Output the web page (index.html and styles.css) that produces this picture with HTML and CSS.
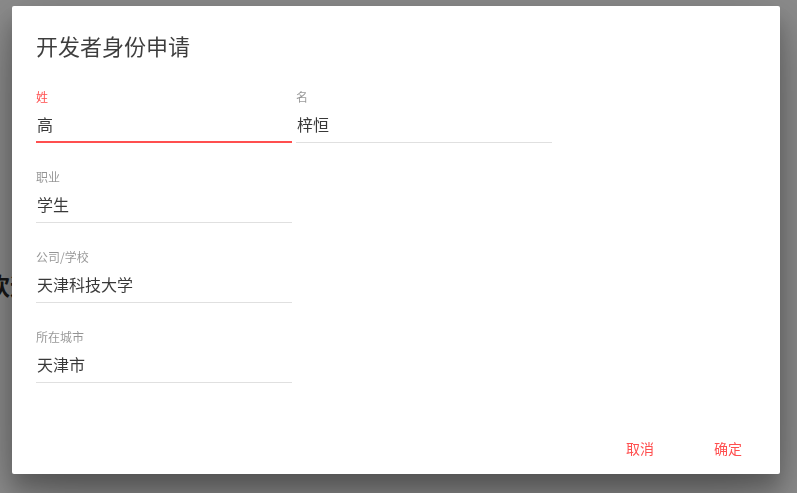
FILE: index.html
```html
<!DOCTYPE html>
<html lang="zh-CN">
<head>
<meta charset="utf-8">
<title>开发者身份申请</title>
<link rel="stylesheet" href="styles.css">
</head>
<body>
<main class="page">
  <h1 class="welcome">欢迎</h1>
</main>
<div class="backdrop"></div>
<div class="dialog" role="dialog">
  <h3 class="dialog-title">开发者身份申请</h3>
  <div class="dialog-content">
    <div class="row">
      <div class="field focused">
        <label class="field-label">姓</label>
        <div class="field-value">高</div>
        <span class="focus-bar"></span>
      </div>
      <div class="field">
        <label class="field-label">名</label>
        <div class="field-value">梓恒</div>
      </div>
    </div>
    <div class="row">
      <div class="field">
        <label class="field-label">职业</label>
        <div class="field-value">学生</div>
      </div>
    </div>
    <div class="row">
      <div class="field">
        <label class="field-label">公司/学校</label>
        <div class="field-value">天津科技大学</div>
      </div>
    </div>
    <div class="row">
      <div class="field">
        <label class="field-label">所在城市</label>
        <div class="field-value">天津市</div>
      </div>
    </div>
  </div>
  <div class="dialog-actions">
    <button class="flat-btn">取消</button>
    <button class="flat-btn">确定</button>
  </div>
</div>
</body>
</html>
```

FILE: styles.css
```css
* { box-sizing: border-box; }
html, body { margin: 0; padding: 0; }
body {
  width: 797px;
  height: 493px;
  overflow: hidden;
  background: #ffffff;
  font-family: "Noto Sans CJK SC", "Noto Sans", Roboto, sans-serif;
}
.page {
  padding-top: 270px;
}
.welcome {
  margin: 0 0 0 -14px;
  font-size: 24px;
  line-height: 30px;
  font-weight: 700;
  color: #2a2a2a;
  white-space: nowrap;
}
.backdrop {
  position: fixed;
  inset: 0;
  background: rgba(0, 0, 0, 0.45);
}
.dialog {
  position: absolute;
  left: 12px;
  top: 6px;
  width: 768px;
  background: #ffffff;
  border-radius: 2px;
  box-shadow: 0 19px 60px rgba(0, 0, 0, 0.30), 0 15px 20px rgba(0, 0, 0, 0.22);
}
.dialog-title {
  margin: 0;
  padding: 23px 24px 21px;
  font-size: 22px;
  line-height: 32px;
  font-weight: 400;
  color: rgba(0, 0, 0, 0.76);
}
.dialog-content {
  padding: 7px 24px 39px;
  display: flex;
  flex-direction: column;
  gap: 26px;
}
.row {
  display: flex;
  gap: 4px;
}
.field {
  position: relative;
  width: 256px;
  display: flex;
  flex-direction: column;
  gap: 7px;
  padding-bottom: 6px;
  border-bottom: 1px solid #e0e0e0;
}
.field-label {
  font-size: 12px;
  line-height: 16px;
  color: rgba(0, 0, 0, 0.42);
}
.field-value {
  font-size: 16px;
  line-height: 24px;
  color: rgba(0, 0, 0, 0.78);
  padding-left: 1px;
}
.focused .field-label { color: #ff4f4f; }
.focus-bar {
  position: absolute;
  left: 0;
  right: 0;
  bottom: -1px;
  height: 2px;
  background: #ff4f4f;
}
.dialog-actions {
  display: flex;
  justify-content: flex-end;
  padding: 8px;
}
.flat-btn {
  width: 88px;
  height: 36px;
  padding: 0 16px;
  border: 0;
  background: transparent;
  font-family: inherit;
  font-size: 14px;
  color: #ff4f4f;
  cursor: pointer;
}
```
